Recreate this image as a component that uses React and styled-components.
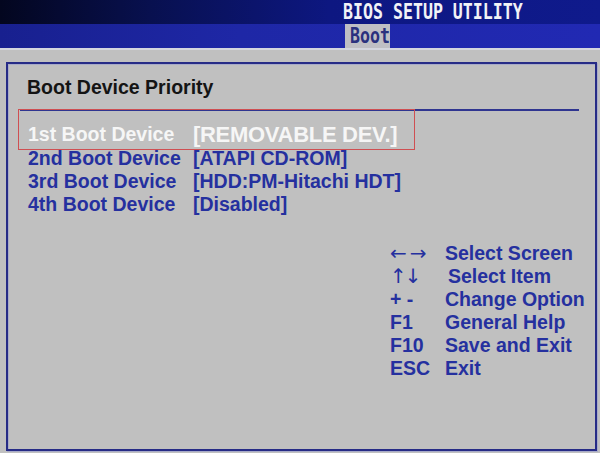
import React from "react";
import styled, { createGlobalStyle } from "styled-components";

const bootOrder = [
	["1st Boot Device", "[REMOVABLE DEV.]"],
	["2nd Boot Device", "[ATAPI CD-ROM]"],
	["3rd Boot Device", "[HDD:PM-Hitachi HDT]"],
	["4th Boot Device", "[Disabled]"]
];

const keys = [
	["←→", "Select Screen", "wide"],
	["↑↓", "Select Item", "tall"],
	["+ -", "Change Option"],
	["F1", "General Help"],
	["F10", "Save and Exit"],
	["ESC", "Exit"]
];

const GlobalStyle = createGlobalStyle`
	html, body {
		margin: 0;
		padding: 0;
		background: #c0c0c0;
	}
	body {
		font-family: "Liberation Sans", Arial, sans-serif;
		width: 600px;
		height: 453px;
		overflow: hidden;
	}
`;

const Screen = styled.div`
	width: 600px;
	height: 453px;
	display: flex;
	flex-direction: column;
	background: #c0c0c0;
`;

const TitleBar = styled.div`
	height: 24px;
	padding-left: 343px;
	display: flex;
	align-items: center;
	background: linear-gradient(90deg, #03061f 0%, #08104f 25%, #0d1781 55%, #0f1a8c 100%);
`;

const BiosText = styled.span`
	display: inline-block;
	font-family: "DejaVu Sans Mono", monospace;
	font-weight: bold;
	font-size: 21px;
	line-height: 24px;
	transform: scaleX(0.79);
	transform-origin: left center;
	white-space: nowrap;
	color: ${p => p.color || "#f2f2f6"};
`;

const TabBar = styled.div`
	height: 24px;
	padding-left: 345px;
	display: flex;
	background: linear-gradient(90deg, #18208f 0%, #1e27a6 40%, #2129b3 100%);
	border-bottom: 2px solid #d4d6de;
`;

const Tab = styled.div`
	width: 45px;
	padding-left: 5px;
	box-sizing: border-box;
	background: #bfbfc4;
	overflow: hidden;
`;

const Frame = styled.div`
	flex: 1;
	margin: 12px 3px 2px 6px;
	border: 2px solid #262b86;
	box-shadow: inset 1px 1px 0 #a8abc8, 1px 1px 0 #a8abc8;
	display: flex;
	flex-direction: column;
`;

const SectionTitle = styled.div`
	padding: 11.5px 0 0 19px;
	font-size: 19.5px;
	line-height: 23px;
	font-weight: bold;
	color: #141414;
`;

const Separator = styled.div`
	height: 2px;
	margin: 10.5px 16px 0 12px;
	background: #2f3590;
`;

const Highlight = styled.div`
	width: 397px;
	height: 41px;
	box-sizing: border-box;
	margin: -2px 0 -3.5px 10px;
	padding: 12.5px 0 0 9px;
	border: 1px solid #cf4f52;
`;

const Rows = styled.div`
	padding-left: 20px;
`;

const Row = styled.div`
	display: grid;
	grid-template-columns: 165px auto;
	align-items: center;
	height: 23px;
	line-height: 23px;
	font-weight: bold;
	font-size: 19.5px;
	color: ${p => (p.$active ? "#f6f6f6" : "#25309f")};
	white-space: nowrap;
`;

const Value = styled.span`
	font-size: ${p => (p.$active ? "22px" : "19.5px")};
	line-height: ${p => (p.$active ? "20px" : "23px")};
	letter-spacing: ${p => (p.$active ? "-0.3px" : "0")};
	padding-top: ${p => (p.$active ? "2px" : "0")};
`;

const Help = styled.div`
	margin: 26px 0 0 382px;
	display: flex;
	flex-direction: column;
`;

const HelpRow = styled.div`
	display: grid;
	grid-template-columns: 55px auto;
	align-items: center;
	height: 23px;
	line-height: 23px;
	color: #25309f;
	font-size: 19.5px;
	font-weight: bold;
	white-space: nowrap;
`;

const Key = styled.span`
	font-family: ${p => (p.$kind ? '"DejaVu Sans", sans-serif' : "inherit")};
	font-weight: ${p => (p.$kind ? "normal" : "bold")};
	font-size: ${p => (p.$kind ? "20px" : "19.5px")};
	line-height: 20px;
	letter-spacing: ${p => (p.$kind === "wide" ? "3px" : p.$kind === "tall" ? "-2px" : "0")};
`;

const Desc = styled.span`
	padding-left: ${p => (p.$shift ? "3px" : "0")};
`;

export default () => {
	const [first, ...rest] = bootOrder;
	return (
		<>
			<GlobalStyle />
			<Screen>
				<TitleBar>
					<BiosText>BIOS SETUP UTILITY</BiosText>
				</TitleBar>
				<TabBar>
					<Tab>
						<BiosText color="#2a317e">Boot</BiosText>
					</Tab>
				</TabBar>
				<Frame>
					<SectionTitle>Boot Device Priority</SectionTitle>
					<Separator />
					<Highlight>
						<Row $active>
							<span>{first[0]}</span>
							<Value $active>{first[1]}</Value>
						</Row>
					</Highlight>
					<Rows>
						{rest.map(([label, value]) => (
							<Row key={label}>
								<span>{label}</span>
								<Value>{value}</Value>
							</Row>
						))}
					</Rows>
					<Help>
						{keys.map(([k, d, kind]) => (
							<HelpRow key={d}>
								<Key $kind={kind}>{k}</Key>
								<Desc $shift={d === "Select Item"}>{d}</Desc>
							</HelpRow>
						))}
					</Help>
				</Frame>
			</Screen>
		</>
	);
};
